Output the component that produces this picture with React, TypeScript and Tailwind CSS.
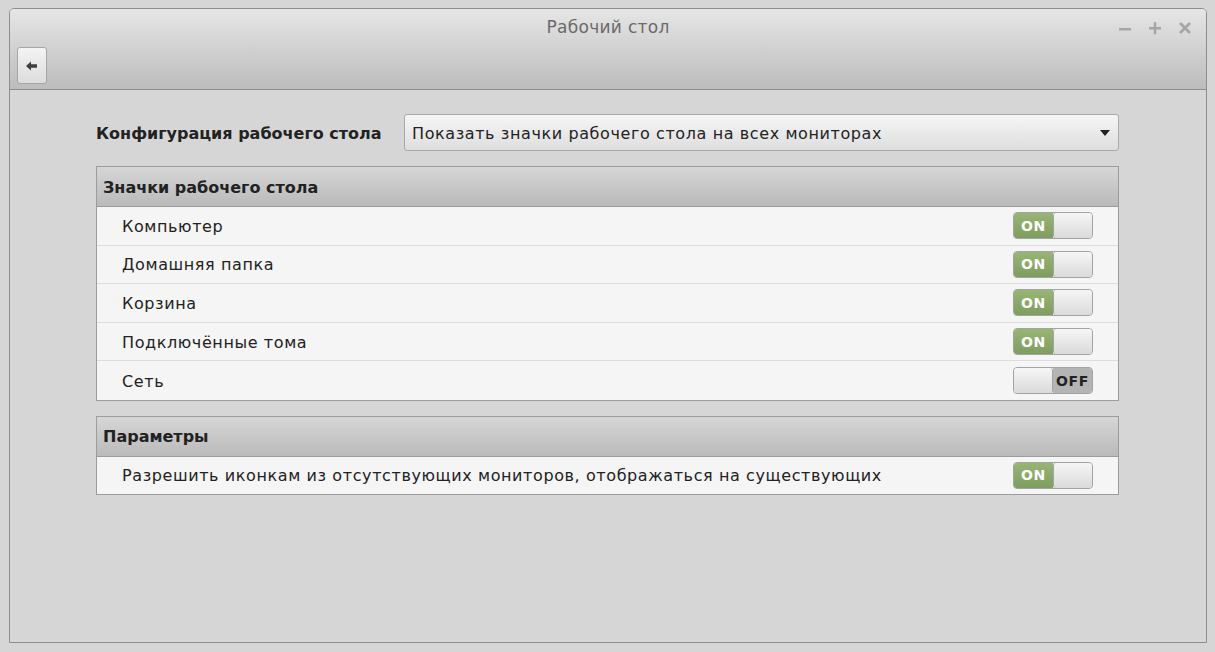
import React from 'react';

const font = { fontFamily: '"DejaVu Sans", "Noto Sans", sans-serif' };

function Toggle({ on }: { on: boolean }) {
  return (
    <div className="flex h-[27px] w-[80px] overflow-hidden rounded-[4px] border border-[#a3a3a3] text-[14px] font-bold">
      {on ? (
        <>
          <div className="flex w-[39px] items-center justify-center bg-gradient-to-b from-[#98b576] to-[#7f9d5e] pt-[1px] text-white">ON</div>
          <div className="flex-1 rounded-[3px] border-l border-[#a3a3a3] bg-gradient-to-b from-[#f6f6f6] to-[#dadada]" />
        </>
      ) : (
        <>
          <div className="w-[39px] rounded-[3px] border-r border-[#a3a3a3] bg-gradient-to-b from-[#f6f6f6] to-[#dadada]" />
          <div className="flex flex-1 items-center justify-center bg-[#b4b4b4] pt-[1px] text-[#222]">OFF</div>
        </>
      )}
    </div>
  );
}

function Section({ title, rows, compact = false }: { title: string; rows: { label: string; on: boolean }[]; compact?: boolean }) {
  return (
    <div className="border border-[#9c9c9c]">
      <div className="flex h-[40px] items-center border-b border-[#9c9c9c] bg-gradient-to-b from-[#d6d6d6] to-[#bababa] pl-[6px] pt-[2px] text-[16px] font-bold text-[#222]">
        {title}
      </div>
      {rows.map((r, i) => (
        <div
          key={r.label}
          className={`flex ${compact ? 'h-[37px]' : 'h-[38.6px]'} items-center justify-between bg-[#f5f5f5] pl-[25px] pr-[25px] text-[16px] tracking-[0.6px] text-[#222] ${
            i < rows.length - 1 ? 'border-b border-[#dddddd]' : ''
          }`}
        >
          <span className="pt-[2px]">{r.label}</span>
          <Toggle on={r.on} />
        </div>
      ))}
    </div>
  );
}

export default function App() {
  return (
    <div className="h-[652px] w-[1215px] bg-[#d6d6d6] pl-[9px] pt-[8px]" style={font}>
      <div className="flex h-[635px] w-[1198px] flex-col overflow-hidden rounded-t-[5px] border border-[#8e8e8e] bg-[#d6d6d6]">
        {/* title bar + toolbar */}
        <div className="relative h-[81px] border-b border-[#909090] bg-gradient-to-b from-[#e6e6e6] to-[#bcbcbc]">
          <div className="pt-[6px] text-center text-[17px] tracking-[0.3px] text-[#6a6a6a]">Рабочий стол</div>
          <div className="absolute right-[14px] top-[12px] flex items-center gap-[16px]">
            <svg width="14" height="14" viewBox="0 0 14 14">
              <rect x="1" y="7" width="12" height="2.5" fill="#a6a6a6" />
            </svg>
            <svg width="14" height="14" viewBox="0 0 14 14">
              <rect x="1" y="6" width="12" height="2.5" fill="#a6a6a6" />
              <rect x="5.75" y="1.2" width="2.5" height="12" fill="#a6a6a6" />
            </svg>
            <svg width="14" height="14" viewBox="0 0 14 14">
              <path d="M2 2 L12 12 M12 2 L2 12" stroke="#a6a6a6" strokeWidth="2.8" />
            </svg>
          </div>
          <div className="absolute left-[7px] top-[38px] flex h-[37px] w-[30px] items-center justify-center rounded-[3px] border border-[#a6a6a6] bg-gradient-to-b from-[#f4f4f4] to-[#dcdcdc]">
            <svg width="12" height="10" viewBox="0 0 12 10">
              <path d="M0 5 L5 0.5 L5 3.2 L11 3.2 L11 6.8 L5 6.8 L5 9.5 Z" fill="#3e3e3e" />
            </svg>
          </div>
        </div>

        {/* content */}
        <div className="ml-[86px] mt-[24px] w-[1023px]">
          <div className="flex items-center">
            <div className="w-[308px] pt-[2px] text-[16px] font-bold text-[#222]">Конфигурация рабочего стола</div>
            <div className="flex h-[37px] flex-1 items-center justify-between rounded-[3px] border border-[#a8a8a8] bg-gradient-to-b from-[#f6f6f6] to-[#dedede] pl-[7px] pr-[8px] text-[16px] tracking-[0.6px] text-[#222]">
              <span className="pt-[2px]">Показать значки рабочего стола на всех мониторах</span>
              <svg width="10" height="6" viewBox="0 0 10 6">
                <path d="M0 0 L10 0 L5 6 Z" fill="#222" />
              </svg>
            </div>
          </div>

          <div className="mt-[15px]">
            <Section
              title="Значки рабочего стола"
              rows={[
                { label: 'Компьютер', on: true },
                { label: 'Домашняя папка', on: true },
                { label: 'Корзина', on: true },
                { label: 'Подключённые тома', on: true },
                { label: 'Сеть', on: false },
              ]}
            />
          </div>

          <div className="mt-[15px]">
            <Section
              title="Параметры"
              compact
              rows={[{ label: 'Разрешить иконкам из отсутствующих мониторов, отображаться на существующих', on: true }]}
            />
          </div>
        </div>
      </div>
    </div>
  );
}
